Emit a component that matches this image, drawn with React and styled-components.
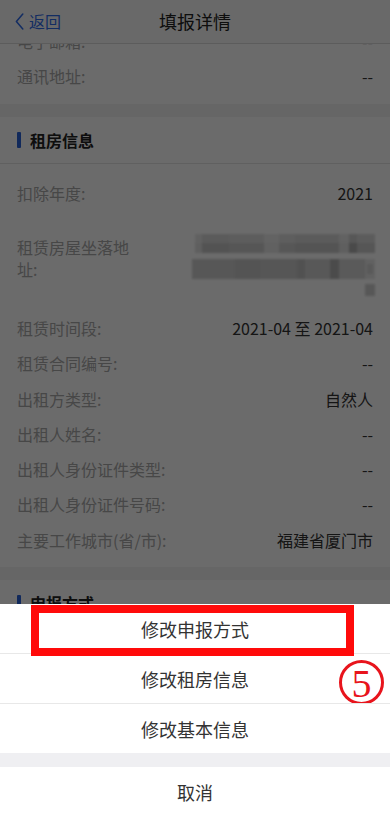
import React from "react";
import styled, { createGlobalStyle } from "styled-components";

const GlobalStyle = createGlobalStyle`
  html, body, #root { height: 100%; }
  body {
    margin: 0;
    font-family: "Noto Sans CJK SC", "Noto Sans", sans-serif;
    background: #f4f4f4;
    -webkit-font-smoothing: antialiased;
  }
  * { box-sizing: border-box; }
`;

const Page = styled.div`
  position: relative;
  height: 100vh;
  display: flex;
  flex-direction: column;
  overflow: hidden;
  background: #f4f4f4;
`;

const NavBar = styled.header`
  position: relative;
  flex: 0 0 44px;
  display: flex;
  align-items: center;
  justify-content: center;
  background: #fafafa;
  border-bottom: 1px solid #dcdcdc;
  padding-bottom: 2px;
  z-index: 1;
`;

const Back = styled.div`
  position: absolute;
  left: 15px;
  top: 0;
  height: 42px;
  display: flex;
  align-items: center;
  gap: 5px;
  font-size: 16px;
  color: #2f6bea;
`;

const Title = styled.h1`
  margin: 0;
  font-size: 18px;
  font-weight: 400;
  color: #222;
`;

const Viewport = styled.main`
  flex: 1;
  overflow: hidden;
`;

const Scroller = styled.div`
  margin-top: -21px;
  display: flex;
  flex-direction: column;
  gap: 13px;
`;

const Card = styled.section`
  background: #fff;
  padding-bottom: 10px;
`;

const SectionHeader = styled.div`
  height: 47px;
  display: flex;
  align-items: center;
  gap: 9px;
  padding-left: 17px;
  border-bottom: 1px solid #e4e4e4;
  font-size: 16px;
  font-weight: 700;
  color: #222;
  &::before {
    content: "";
    width: 4px;
    height: 16px;
    border-radius: 1px;
    background: #2a62d8;
  }
`;

const List = styled.div`
  padding: 12px 17px 0 17px;
`;

const FirstList = styled.div`
  padding: 0 17px;
`;

const Row = styled.div`
  display: flex;
  justify-content: space-between;
  align-items: flex-start;
  gap: 12px;
  padding: 6.67px 0;
  font-size: 16px;
  line-height: 22px;
  margin: ${(p) => (p.$tall ? "18px 0 8px" : "0")};
`;

const Label = styled.span`
  color: #a9a9a9;
  white-space: ${(p) => (p.$wrap ? "normal" : "nowrap")};
  width: ${(p) => (p.$wrap ? "116px" : "auto")};
  flex: 0 0 auto;
`;

const Value = styled.span`
  color: #333;
  text-align: right;
  white-space: nowrap;
`;

const Mosaic = styled.svg`
  display: block;
  margin-top: -2px;
  margin-right: -2px;
  filter: blur(0.8px);
  flex: 0 0 auto;
`;

const Mask = styled.div`
  position: fixed;
  inset: 0;
  background: rgba(0, 0, 0, 0.58);
  z-index: 5;
`;

const Sheet = styled.div`
  position: fixed;
  left: 0;
  right: 0;
  bottom: 0;
  z-index: 6;
  background: #efeff2;
  display: flex;
  flex-direction: column;
  gap: 14px;
`;

const SheetGroup = styled.div`
  display: flex;
  flex-direction: column;
  background: #fff;
`;

const SheetItem = styled.div`
  position: relative;
  height: ${(p) => (p.$first ? "49px" : "50px")};
  display: flex;
  align-items: center;
  justify-content: center;
  font-size: 18px;
  color: #333;
  background: #fff;
  border-top: ${(p) => (p.$first ? "none" : "1px solid #e8e8e8")};
  z-index: ${(p) => (p.$first ? 2 : 1)};
`;

const CancelItem = styled.div`
  height: 50px;
  display: flex;
  align-items: center;
  justify-content: center;
  font-size: 18px;
  color: #333;
  background: #fff;
`;

const Highlight = styled.div`
  position: absolute;
  left: 31px;
  top: 1px;
  width: 323px;
  height: 51px;
  border: 8px solid #ff0a0a;
  pointer-events: none;
`;

const StepBadge = styled.div`
  position: absolute;
  right: 6px;
  top: 6px;
  width: 45px;
  height: 45px;
  border: 3px solid #e8141c;
  border-radius: 50%;
  display: flex;
  align-items: center;
  justify-content: center;
  font-family: "Liberation Serif", "DejaVu Serif", serif;
  font-size: 40px;
  line-height: 1;
  color: #e8141c;
  padding-top: 2px;
`;

const Chevron = () => (
  <svg width="9" height="17" viewBox="0 0 9 17" fill="none">
    <polyline points="7.8,1 1.4,8.5 7.8,16" stroke="#2f6bea" strokeWidth="1.5" strokeLinecap="round" strokeLinejoin="round" />
  </svg>
);

const mosaicBlocks = [
  [3, 0, 7, 9, "#e8e8e8"], [10, 0, 27, 9, "#d9d9d9"], [37, 0, 35, 9, "#dedede"],
  [72, 0, 15, 9, "#ececec"], [87, 0, 16, 9, "#e0e0e0"], [103, 0, 44, 9, "#dadada"],
  [147, 0, 10, 9, "#e9e9e9"], [157, 0, 8, 9, "#cfcfcf"], [165, 0, 18, 9, "#dcdcdc"],
  [3, 9, 7, 10, "#e2e2e2"], [10, 9, 27, 10, "#c6c6c6"], [37, 9, 35, 10, "#cdcdcd"],
  [72, 9, 15, 10, "#e6e6e6"], [87, 9, 16, 10, "#d0d0d0"], [103, 9, 44, 10, "#c8c8c8"],
  [147, 9, 10, 10, "#e2e2e2"], [157, 9, 8, 10, "#b0b0b0"], [165, 9, 18, 10, "#cccccc"],
  [0, 25, 43, 20, "#cfcfcf"], [43, 25, 25, 20, "#c8c8c8"], [68, 25, 37, 20, "#cccccc"],
  [105, 25, 8, 20, "#c2c2c2"], [113, 25, 25, 20, "#d2d2d2"], [138, 25, 9, 20, "#b4b4b4"],
  [147, 25, 26, 20, "#d6d6d6"], [173, 25, 10, 20, "#e8e8e8"], [175, 30, 6, 10, "#d4d4d4"],
  [173, 50, 10, 12, "#d0d0d0"],
];

const AddressMosaic = () => (
  <Mosaic width="183" height="62" viewBox="0 0 183 62">
    {mosaicBlocks.map(([x, y, w, h, c], i) => (
      <rect key={i} x={x} y={y} width={w} height={h} fill={c} />
    ))}
  </Mosaic>
);

const rentalRows = [
  ["租赁时间段:", "2021-04 至 2021-04"],
  ["租赁合同编号:", "--"],
  ["出租方类型:", "自然人"],
  ["出租人姓名:", "--"],
  ["出租人身份证件类型:", "--"],
  ["出租人身份证件号码:", "--"],
  ["主要工作城市(省/市):", "福建省厦门市"],
];

export default function App() {
  return (
    <Page>
      <GlobalStyle />
      <NavBar>
        <Back>
          <Chevron />
          返回
        </Back>
        <Title>填报详情</Title>
      </NavBar>
      <Viewport>
        <Scroller>
          <Card>
            <FirstList>
              <Row>
                <Label>电子邮箱:</Label>
                <Value>--</Value>
              </Row>
              <Row>
                <Label>通讯地址:</Label>
                <Value>--</Value>
              </Row>
            </FirstList>
          </Card>
          <Card>
            <SectionHeader>租房信息</SectionHeader>
            <List>
              <Row>
                <Label>扣除年度:</Label>
                <Value>2021</Value>
              </Row>
              <Row $tall>
                <Label $wrap>租赁房屋坐落地址:</Label>
                <AddressMosaic />
              </Row>
              {rentalRows.map(([l, v]) => (
                <Row key={l}>
                  <Label>{l}</Label>
                  <Value>{v}</Value>
                </Row>
              ))}
            </List>
          </Card>
          <Card>
            <SectionHeader>申报方式</SectionHeader>
            <List>
              <Row>
                <Label>申报方式:</Label>
                <Value>通过扣缴义务人申报</Value>
              </Row>
              <Row>
                <Label>扣缴义务人:</Label>
                <Value>--</Value>
              </Row>
            </List>
          </Card>
        </Scroller>
      </Viewport>
      <Mask />
      <Sheet>
        <SheetGroup>
          <SheetItem $first>
            修改申报方式
            <Highlight />
          </SheetItem>
          <SheetItem>
            修改租房信息
            <StepBadge>5</StepBadge>
          </SheetItem>
          <SheetItem>修改基本信息</SheetItem>
        </SheetGroup>
        <CancelItem>取消</CancelItem>
      </Sheet>
    </Page>
  );
}
